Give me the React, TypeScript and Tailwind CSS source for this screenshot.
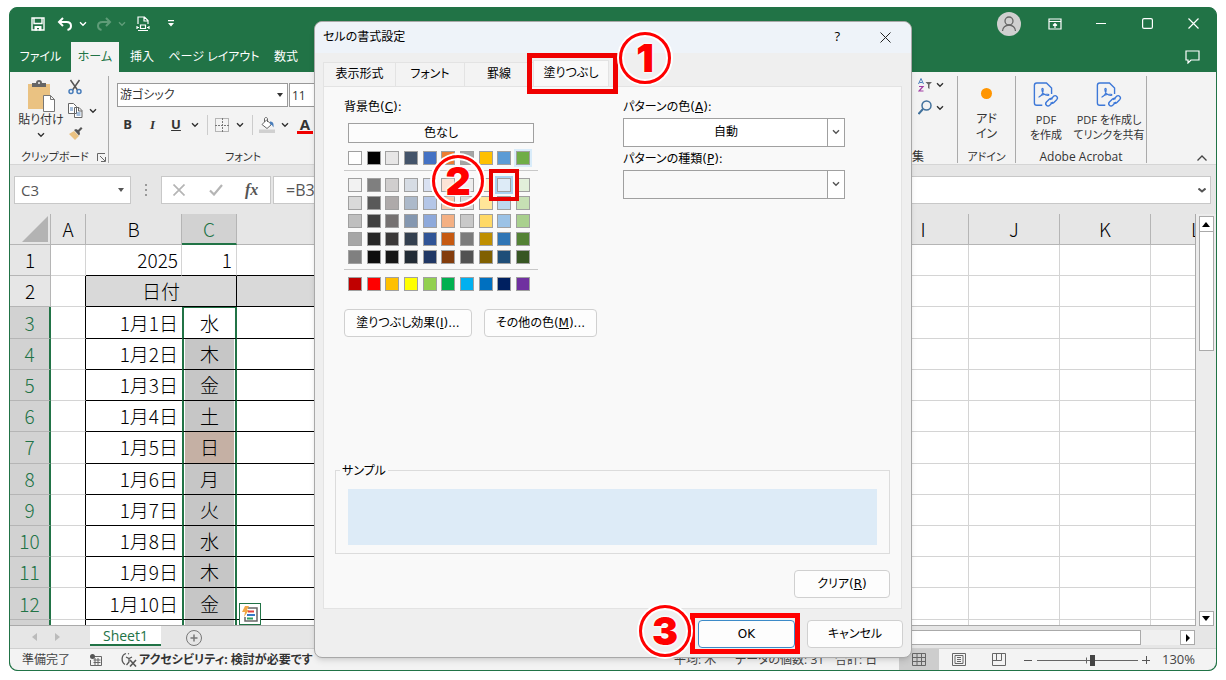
import React, { useState } from 'react';

const columns = ['A', 'B', 'C', 'D', 'E', 'F', 'G', 'H', 'I', 'J', 'K', 'L'];
const restColumns = ['E', 'F', 'G', 'H', 'I', 'J', 'K', 'L'];

const days = [
  { row: '3', date: '1月1日', day: '水' },
  { row: '4', date: '1月2日', day: '木' },
  { row: '5', date: '1月3日', day: '金' },
  { row: '6', date: '1月4日', day: '土' },
  { row: '7', date: '1月5日', day: '日' },
  { row: '8', date: '1月6日', day: '月' },
  { row: '9', date: '1月7日', day: '火' },
  { row: '10', date: '1月8日', day: '水' },
  { row: '11', date: '1月9日', day: '木' },
  { row: '12', date: '1月10日', day: '金' },
  { row: '', date: '', day: '' },
];

const themeColors = ['#ffffff', '#000000', '#e7e6e6', '#44546a', '#4472c4', '#ed7d31', '#a5a5a5', '#ffc000', '#5b9bd5', '#70ad47'];

const tintRows = [
  ['#f2f2f2', '#7f7f7f', '#d0cece', '#d6dce4', '#d9e1f2', '#fce4d6', '#ededed', '#fff2cc', '#ddebf7', '#e2efda'],
  ['#d9d9d9', '#595959', '#aeaaaa', '#acb9ca', '#b4c6e7', '#f8cbad', '#dbdbdb', '#ffe699', '#bdd7ee', '#c6e0b4'],
  ['#bfbfbf', '#404040', '#757171', '#8497b0', '#8ea9db', '#f4b084', '#c9c9c9', '#ffd966', '#9bc2e6', '#a9d08e'],
  ['#a6a6a6', '#262626', '#3a3838', '#333f4f', '#305496', '#c65911', '#7b7b7b', '#bf8f00', '#2f75b5', '#548235'],
  ['#808080', '#0d0d0d', '#161616', '#222b35', '#203764', '#833c0c', '#525252', '#806000', '#1f4e78', '#375623'],
];

const standardColors = ['#c00000', '#ff0000', '#ffc000', '#ffff00', '#92d050', '#00b050', '#00b0f0', '#0070c0', '#002060', '#7030a0'];

const Chevron: React.FC<{ className?: string }> = ({ className = '' }) => (
  <svg viewBox="0 0 8 6" className={`w-2 h-[6px] shrink-0 ${className}`} fill="none" stroke="currentColor" strokeWidth="1.4">
    <path d="M1 1.2 4 4.2 7 1.2" />
  </svg>
);

const Caret: React.FC<{ className?: string }> = ({ className = '' }) => (
  <svg viewBox="0 0 6 4" className={`w-[6px] h-1 shrink-0 ${className}`} fill="currentColor">
    <path d="M0 0h6L3 4z" />
  </svg>
);

const TitleBar = () => (
  <div className="h-[34px] shrink-0 flex items-center text-white pl-[21px] pr-[17px] pb-[3px]">
    <button aria-label="上書き保存">
      <svg viewBox="0 0 14 14" className="w-[14px] h-[14px]" fill="none" stroke="currentColor" strokeWidth="1.4">
        <path d="M1 1h12v12H1zM3 1v5.500h8V1" />
        <path fill="currentColor" stroke="none" d="M3.500 9h7v4.500H8V11H6v2.500H3.500z" />
      </svg>
    </button>
    <button aria-label="元に戻す" className="ml-3 flex items-center gap-[6px]">
      <svg viewBox="0 0 16 14" className="w-4 h-[14px]" fill="none" stroke="currentColor" strokeWidth="2">
        <path d="M6 1 2 5l4 4M2 5h7.500c3 0 4.500 1.500 4.500 4 0 2-1.500 3.500-3.500 4" />
      </svg>
      <Chevron />
    </button>
    <button aria-label="やり直し" className="ml-[9px] flex items-center gap-[6px] text-[#5f9c78]">
      <svg viewBox="0 0 16 14" className="w-4 h-[14px]" fill="none" stroke="currentColor" strokeWidth="2">
        <path d="m10 1 4 4-4 4M14 5H6.500C3.500 5 2 6.500 2 9c0 2 1.500 3.500 3.500 4" />
      </svg>
      <Chevron />
    </button>
    <button aria-label="印刷プレビュー" className="ml-[10px]">
      <svg viewBox="0 0 14 16" className="w-[14px] h-4" fill="none" stroke="currentColor" strokeWidth="1.2">
        <path d="M2 8V1h6.500L12 4.500V8M8 1v4h4M2 14.500h10M4.500 9h5v3.500h-5zM1 11.500h2M11 11.500h2M1 10v3M13 10v3" />
      </svg>
    </button>
    <button aria-label="カスタマイズ" className="ml-[18px]">
      <svg viewBox="0 0 6 7" className="w-[6px] h-[7px]" fill="currentColor">
        <path d="M0 0h6v1.200H0zM0 3h6L3 6.500z" />
      </svg>
    </button>
    <div className="ml-auto flex items-center">
      <button aria-label="アカウント" className="mr-[27px]">
        <svg viewBox="0 0 24 24" className="w-6 h-6" fill="none" stroke="#666" strokeWidth="1.300">
          <circle cx="12" cy="12" r="12" fill="#d0d0d0" stroke="none" />
          <circle cx="12" cy="9" r="4" />
          <path d="M5.500 19c0-3.500 3-6 6.500-6s6.500 2.500 6.500 6" />
        </svg>
      </button>
      <button aria-label="リボンの表示オプション" className="mr-[34px]">
        <svg viewBox="0 0 14 12" className="w-[14px] h-3" fill="none" stroke="currentColor" strokeWidth="1.200">
          <path d="M1 1h12v10H1zM1 3.500h12M7 10V5.500M5 7.500l2-2 2 2" />
        </svg>
      </button>
      <button aria-label="最小化" className="mr-9">
        <svg viewBox="0 0 10 10" className="w-[10px] h-[10px]" stroke="currentColor"><path d="M0 4.500h10" /></svg>
      </button>
      <button aria-label="最大化" className="mr-[35px]">
        <svg viewBox="0 0 11 11" className="w-[11px] h-[11px]" fill="none" stroke="currentColor" strokeWidth="1.200"><rect x="0.600" y="0.600" width="9.800" height="9.800" rx="1.500" /></svg>
      </button>
      <button aria-label="閉じる">
        <svg viewBox="0 0 11 11" className="w-[11px] h-[11px]" stroke="currentColor" strokeWidth="1.200"><path d="m.5.5 10 10M10.500.5l-10 10" /></svg>
      </button>
    </div>
  </div>
);

const RibbonTabs = () => (
  <div className="h-[30px] shrink-0 flex items-center text-white text-xs">
    <button className="w-[61px] h-full">ファイル</button>
    <button className="w-12 h-full bg-[#f3f3f3] text-[#217346]">ホーム</button>
    <button className="w-[46px] h-full">挿入</button>
    <button className="w-[98px] h-full whitespace-nowrap">ページ レイアウト</button>
    <button className="w-[46px] h-full">数式</button>
    <button aria-label="コメント" className="ml-auto mr-4">
      <svg viewBox="0 0 15 14" className="w-[15px] h-[14px]" fill="none" stroke="currentColor" strokeWidth="1.200">
        <path d="M1 1h13v9H6l-3 3v-3H1z" />
      </svg>
    </button>
  </div>
);

const AcrobatIcon = () => (
  <svg viewBox="0 0 28 30" className="w-[26px] h-7" fill="none" stroke="#3d78d8" strokeWidth="1.500">
    <path d="M10 26H4c-1.500 0-2.500-1-2.500-2.500v-19C1.500 3 2.500 2 4 2h10.500L20 7.500V14" />
    <path strokeWidth="1.200" d="M6 17.500c3-1.500 5-5 5-8.500 0-1.500-1.500-1.500-1.500 0 0 3.500 3 6.500 6.500 6.500 1.500 0 1.500-1.200 0-1.300-4-.2-8 1.300-10 3.300" />
    <path d="m18.500 20 3.500-3.500c2.500-2.200 5.800 1 3.500 3.500L22.500 23c-1 1-2.500 1-3.500 0" />
    <path d="M21.500 22.500 18 26c-2.500 2.200-5.800-1-3.500-3.500l3-3c1-1 2.500-1 3.500 0" />
  </svg>
);

const Ribbon = () => (
  <div className="h-[93px] shrink-0 flex bg-[#f3f3f3] text-xs text-[#333] border-b border-[#d5d5d5]">
    <div className="w-[99px] mt-1 mb-px border-r border-[#aaa] flex flex-col">
      <div className="flex-1 flex">
        <button className="ml-1 w-[54px] pt-1 flex flex-col items-center whitespace-nowrap leading-4">
          <svg viewBox="0 0 28 32" className="w-7 h-8 shrink-0">
            <path fill="#eac282" d="M1 4h22v25H1z" />
            <path fill="#666" d="M5 7V3h4a3 3 0 0 1 6 0h4v4z" />
            <circle cx="12" cy="3" r="1" fill="#f3f3f3" />
            <path fill="#fff" stroke="#777" d="M16.500 15.500h7l4 4v12h-11zM23.500 15.500v4h4" />
          </svg>
          貼り付け
          <Chevron className="mt-1" />
        </button>
        <div className="flex flex-col gap-2 pt-[3px]">
          <button aria-label="切り取り">
            <svg viewBox="0 0 14 16" className="w-[14px] h-4" fill="none" strokeWidth="1.500">
              <path stroke="#555" d="m2.500 1 7 10M11.500 1l-7 10" />
              <circle cx="3" cy="12.500" r="2" stroke="#4a7ebb" />
              <circle cx="11" cy="12.500" r="2" stroke="#4a7ebb" />
            </svg>
          </button>
          <button aria-label="コピー" className="flex items-center gap-[6px]">
            <svg viewBox="0 0 15 15" className="w-[15px] h-[15px]" fill="#fff" stroke="#666">
              <path d="M.5.500h5l3 3v7h-8zM6.500 4.500h4.500l3 3v7H6.500zM10.500 4.500V8H14" />
              <path stroke="#4a7ebb" d="M2 5h3M2 7h3M8.500 10h4M8.500 12h4" />
            </svg>
            <Chevron />
          </button>
          <button aria-label="書式のコピー">
            <svg viewBox="0 0 15 14" className="w-[15px] h-[14px]">
              <path fill="#eac282" d="m1 8 5-3 5 5-4 4z" />
              <path fill="#555" d="m6 4 2-1 2 1 3-3 1.500 1.500-3 3L12 8l-1 1.500z" />
            </svg>
          </button>
        </div>
      </div>
      <div className="h-3 flex items-center pl-[11px] pr-[2px] text-[11px]">
        クリップボード
        <svg viewBox="0 0 9 9" className="ml-auto w-[9px] h-[9px]" fill="none" stroke="#666">
          <path d="M.5 8V.500H8M3 3l5 5M8.500 4v4.500H4" />
        </svg>
      </div>
    </div>

    <div className="w-[260px] mt-1 mb-px pl-2 flex flex-col">
      <div className="flex gap-px mt-[7px]">
        <div className="w-[171px] h-6 bg-white border border-[#999] flex items-center justify-between px-[2px]">
          <input aria-label="フォント名" defaultValue="游ゴシック" className="w-[140px] outline-none" />
          <Caret className="mr-[2px]" />
        </div>
        <input aria-label="フォント サイズ" defaultValue="11" className="w-11 h-6 bg-white border border-[#999] px-[2px]" />
      </div>
      <div className="h-9 flex items-center pl-[6px]">
        <button className="w-[9px] font-bold text-[13px]">B</button>
        <button className="ml-4 w-[9px] font-bold italic text-[13px] font-['Liberation_Serif',serif]">I</button>
        <button className="ml-[14px] w-[10px] font-bold underline text-[13px]">U</button>
        <Chevron className="ml-[10px]" />
        <div className="ml-2 w-px h-5 bg-[#ccc]" />
        <svg viewBox="0 0 14 14" className="ml-[7px] w-[14px] h-[14px]" fill="none" stroke="#777">
          <path strokeDasharray="1 1" d="M.5.500h13v13H.5z" />
          <path d="M0 7.500h14M7.500 0v14" strokeDasharray="2 1" />
        </svg>
        <Chevron className="ml-[7px]" />
        <div className="ml-2 w-px h-5 bg-[#ccc]" />
        <svg viewBox="0 0 16 16" className="ml-[6px] w-4 h-4" fill="none">
          <path stroke="#666" fill="#fff" d="m3 7.500 4.500-4.500 5 4.500L8 11.500zM5.500 5V2c0-2 3-2 3 0v3" />
          <path fill="#4a7ebb" d="M11 4.500c3 0 4 2 3.500 6-1-1.500-1-3-3.500-3z" />
          <path fill="#d0d0d0" d="M0 12.500h16V16H0z" />
        </svg>
        <Chevron className="ml-[6px]" />
        <button className="ml-2 w-4 h-[17px] leading-[14px] font-bold text-[15px] border-b-[3px] border-[#f00000]">A</button>
      </div>
      <div className="mt-auto h-3 flex items-center justify-center text-[11px]">フォント</div>
    </div>

    <div className="ml-auto w-[91px] mt-1 mb-px border-r border-[#aaa] flex flex-col items-center">
      <div className="flex-1 self-end pr-[13px] pt-[2px] flex flex-col gap-2">
        <button aria-label="並べ替えとフィルター" className="flex items-center gap-1">
          <svg viewBox="0 0 14 14" className="w-[14px] h-[14px]" fill="none">
            <path stroke="#4a7ebb" d="M.5 6 3 .500 5.500 6M1.500 4.500h3" />
            <path stroke="#a23fa5" strokeWidth="1.200" d="M1 8.500h4L1 13h4.500" />
            <path fill="#666" d="M7.500 4H14l-2.500 2.500V11l-1.500-1V6.500z" />
          </svg>
          <Chevron />
        </button>
        <button aria-label="検索と選択" className="flex items-center gap-1">
          <svg viewBox="0 0 14 15" className="w-[14px] h-[15px]" fill="none" stroke="#41719c" strokeWidth="1.500">
            <circle cx="8.500" cy="5.500" r="4.500" />
            <path strokeWidth="2" d="m5 9-4.500 5" />
          </svg>
          <Chevron />
        </button>
      </div>
      <div className="h-3 flex items-center">編集</div>
    </div>
    <div className="w-[58px] mt-1 mb-px border-r border-[#aaa] flex flex-col items-center">
      <button className="flex-1 flex flex-col items-center leading-[15px] pt-3">
        <span className="w-[11px] h-[11px] rounded-full bg-[#ff9500] mb-3" />
        <span>アド<br />イン</span>
      </button>
      <div className="h-3 flex items-center text-[11px]">アドイン</div>
    </div>
    <div className="w-[131px] mt-1 mb-px border-r border-[#aaa] flex flex-col items-center">
      <div className="flex-1 flex leading-[15px] whitespace-nowrap text-[11px]">
        <button className="w-14 pt-[5px] flex flex-col items-center">
          <AcrobatIcon />
          <span className="mt-[3px]">PDF<br />を作成</span>
        </button>
        <button className="w-[70px] pt-[5px] flex flex-col items-center">
          <AcrobatIcon />
          <span className="mt-[3px]">PDF を作成し<br />てリンクを共有</span>
        </button>
      </div>
      <div className="h-3 flex items-center">Adobe Acrobat</div>
    </div>
    <button aria-label="リボンを折りたたむ" className="w-[69px] flex items-end justify-end pr-2 pb-[3px]">
      <svg viewBox="0 0 10 6" className="w-[10px] h-[6px] mr-[1px]" fill="none" stroke="#444" strokeWidth="1.300"><path d="M.5 5.500 5 1l4.500 4.500" /></svg>
    </button>
  </div>
);

const FormulaBar = () => (
  <div className="h-[49px] shrink-0 bg-[#e6e6e6] flex items-start pt-[11px] pl-1 pr-[5px] text-[#555]">
    <div className="w-[117px] h-7 bg-white border border-[#c8c8c8] flex items-center justify-between px-[6px]">
      <input aria-label="名前ボックス" defaultValue="C3" className="w-20 text-[15px] outline-none" />
      <Caret />
    </div>
    <div className="h-7 w-[30px] flex flex-col items-center justify-center gap-[3px]">
      <span className="w-[2px] h-[2px] bg-[#999]" />
      <span className="w-[2px] h-[2px] bg-[#999]" />
      <span className="w-[2px] h-[2px] bg-[#999]" />
    </div>
    <div className="w-[110px] h-7 bg-white border border-[#c8c8c8] flex items-center pl-[11px]">
      <svg viewBox="0 0 12 12" className="w-3 h-3" stroke="#b5b5b5" strokeWidth="1.700"><path d="m.5.5 11 11M11.500.5l-11 11" /></svg>
      <svg viewBox="0 0 14 12" className="ml-6 w-[14px] h-3" fill="none" stroke="#b5b5b5" strokeWidth="2.200"><path d="m1 6.500 4 4L13 1" /></svg>
      <span className="ml-[22px] italic font-bold text-base leading-4 font-['Liberation_Serif',serif]">fx</span>
    </div>
    <div className="ml-[2px] flex-1 h-7 bg-white border border-[#c8c8c8] flex items-center pl-3 pr-1">
      <input aria-label="数式バー" defaultValue="=B3" className="flex-1 text-base outline-none" />
      <svg viewBox="0 0 8 5" className="w-2 h-[5px]" fill="none" stroke="#555" strokeWidth="2"><path d="m.5.500 3.500 3 3.500-3" /></svg>
    </div>
  </div>
);

const Sheet = () => (
  <div className="flex-1 min-h-0 flex bg-[#e6e6e6]">
    <div className="flex-1 min-w-0 overflow-hidden relative border-r border-b border-[#aaa] bg-white">
      <table className="table-fixed w-[1232px] h-[437px] border-separate border-spacing-0 text-[19px] leading-5 font-light text-black font-['Noto_Sans_CJK_JP',sans-serif]">
        <colgroup>
          <col className="w-[41px]" />
          <col className="w-[35px]" />
          <col className="w-[96px]" />
          <col className="w-[55px]" />
          <col className="w-[277px]" />
          {restColumns.map(c => <col key={c} className="w-[91px]" />)}
        </colgroup>
        <thead>
          <tr className="h-[31px] bg-[#e6e6e6]">
            <th className="border-r border-b border-[#b5b5b5] p-0 align-bottom">
              <svg viewBox="0 0 26 26" className="w-[26px] h-[26px] ml-auto mr-[2px] mb-[2px]" fill="#b3b3b3"><path d="M26 0v26H0z" /></svg>
            </th>
            {columns.map(c => (
              <th key={c} className={`p-0 font-light border-r ${c === 'C' ? 'bg-[#d2d2d2] text-[#217346] border-b-2 border-r-[#b5b5b5] border-b-[#217346]' : 'border-b border-[#b5b5b5]'}`}>{c}</th>
            ))}
          </tr>
        </thead>
        <tbody>
          <tr className="h-[31px]">
            <th className="p-0 font-light bg-[#e6e6e6] border-r border-b border-[#b5b5b5]">1</th>
            <td className="border-r border-b border-[#d4d4d4]" />
            <td className="p-0 pr-[3px] text-right border-r border-b border-r-[#d4d4d4] border-b-black">2025</td>
            <td className="p-0 pr-1 text-right border-r border-b border-r-[#d4d4d4] border-b-black">1</td>
            <td className="border-b border-black" />
            {restColumns.map(c => <td key={c} className="border-r border-b border-[#d4d4d4]" />)}
          </tr>
          <tr className="h-[31px]">
            <th className="p-0 font-light bg-[#e6e6e6] border-r border-b border-[#b5b5b5]">2</th>
            <td className="border-r border-b border-b-[#d4d4d4] border-r-black" />
            <td colSpan={2} className="p-0 text-center bg-[#d9d9d9] border-r border-b border-black">日付</td>
            <td className="bg-[#d9d9d9] border-r border-b border-black" />
            {restColumns.map(c => <td key={c} className="border-r border-b border-[#d4d4d4]" />)}
          </tr>
          {days.map(d => (
            <tr key={d.row} className="h-[31px]">
              <th className="p-0 font-light bg-[#d2d2d2] text-[#217346] border-r-2 border-b border-r-[#217346] border-b-[#b5b5b5]">{d.row}</th>
              <td className="border-r border-b border-b-[#d4d4d4] border-r-black" />
              <td className="p-0 pr-1 text-right border-b border-black">{d.date}</td>
              <td className={`p-0 text-center border-x-2 border-b border-x-[#217346] border-b-black bg-clip-padding ${d.row === '3' ? 'shadow-[inset_0_1px_0_#217346]' : 'shadow-[inset_1px_0_0_white,inset_-1px_0_0_white]'} ${d.row === '3' ? 'bg-white' : d.day === '日' ? 'bg-[#c5b0a4]' : 'bg-[#c6c6c6]'}`}>{d.day}</td>
              <td className="border-r border-b border-black" />
              {restColumns.map(c => <td key={c} className="border-r border-b border-[#d4d4d4]" />)}
            </tr>
          ))}
        </tbody>
      </table>
      <button aria-label="クイック分析" className="absolute left-[229px] bottom-0 w-[22px] h-[22px] bg-white border border-[#217346]">
        <svg viewBox="0 0 20 20" className="w-5 h-5" fill="none">
          <path stroke="#666" strokeWidth="1.500" d="M8 4h9v13H5v-4" />
          <path fill="#f0a848" d="M5 2h4L7 6h2l-5 7 1-5H2z" />
          <path stroke="#e04040" strokeWidth="2" d="M8 7.500h6" />
          <path stroke="#3878c8" strokeWidth="2" d="M7 11h8" />
          <path stroke="#30a060" strokeWidth="2" d="M7 14.500h6" />
        </svg>
      </button>
    </div>
    {/* vertical scroll bar */}
    <div className="w-5 flex flex-col items-center pt-[2px] bg-[#ececec]">
      <button aria-label="上へ" className="w-[15px] h-4 bg-white border border-[#aaa] flex items-center justify-center">
        <svg viewBox="0 0 8 5" className="w-2 h-[5px]"><path d="M0 5h8L4 0z" /></svg>
      </button>
      <div className="w-[15px] h-[119px] bg-white border border-t-0 border-[#aaa]" />
      <button aria-label="下へ" className="mt-auto w-[15px] h-[15px] bg-white border border-[#aaa] flex items-center justify-center">
        <svg viewBox="0 0 8 5" className="w-2 h-[5px]"><path d="M0 0h8L4 5z" /></svg>
      </button>
    </div>
  </div>
);

const SheetTabs = () => (
  <div className="h-[22px] shrink-0 flex items-start bg-[#e6e6e6]">
    <div className="w-[80px] h-full flex items-center justify-center gap-[18px] pr-2">
      <svg viewBox="0 0 5 8" className="w-[5px] h-2" fill="#bbb"><path d="M5 0v8L0 4z" /></svg>
      <svg viewBox="0 0 5 8" className="w-[5px] h-2" fill="#bbb"><path d="M0 0v8l5-4z" /></svg>
    </div>
    <button className="w-[71px] h-5 leading-[17px] bg-white border-b-2 border-[#217346] text-[#217346] text-sm">Sheet1</button>
    <button aria-label="新しいシート" className="ml-[25px] mt-1">
      <svg viewBox="0 0 16 16" className="w-4 h-4" fill="none" stroke="#777"><circle cx="8" cy="8" r="7.500" /><path strokeWidth="1.500" d="M8 4.500v7M4.500 8h7" /></svg>
    </button>
    <div className="ml-auto w-1/2 mr-[21px] mt-1 h-[15px] flex">
      <div className="flex-1 bg-white border border-[#aaa]" />
      <div className="w-[39px] bg-[#f0f0f0]" />
      <button aria-label="右へ" className="w-[15px] bg-white border border-[#aaa] flex items-center justify-center">
        <svg viewBox="0 0 4 8" className="w-1 h-2"><path d="M0 0v8l4-4z" /></svg>
      </button>
    </div>
  </div>
);

const StatusBar = () => (
  <div className="h-[22px] shrink-0 flex items-center bg-[#f3f3f3] border-t border-[#d0d0d0] text-xs text-[#444] whitespace-nowrap">
    <span className="ml-3 w-[68px]">準備完了</span>
    <svg viewBox="0 0 12 12" className="w-3 h-3" fill="none" stroke="#666">
      <path d="M3 2.500h8.500v9H.500V6M3.500 6h7M3.500 8.500h7M5 4v7M8 4v7" />
      <circle cx="2.500" cy="2.500" r="2.500" fill="#555" stroke="none" />
    </svg>
    <svg viewBox="0 0 16 15" className="ml-[19px] w-4 h-[15px]" fill="none" stroke="#555" strokeWidth="1.300">
      <path d="M5 1.500C0 3 0 10 4 12.500M7 1.500l1 .5M5 5l3 1.500L11 5M8 6.500V10l-2.500 3" />
      <path strokeWidth="1.600" d="m9 8 6 6.500M15 8l-6 6.500" />
    </svg>
    <span className="ml-[2px] font-bold text-[#333]">アクセシビリティ: 検討が必要です</span>
    <div className="ml-auto flex items-center h-full">
      <span className="w-[61px]">平均: 木</span>
      <span className="w-[100px]">データの個数: 31</span>
      <span className="w-[64px]">合計: 日</span>
      <button aria-label="標準" className="w-10 h-full bg-[#cdcdcd] flex items-center justify-center">
        <svg viewBox="0 0 14 13" className="w-[14px] h-[13px]" fill="none" stroke="#666"><path d="M.5.500h13v12H.500zM.500 4.500h13M.500 8.500h13M5 0v13M9.500 0v13" /></svg>
      </button>
      <button aria-label="ページ レイアウト" className="w-10 h-full flex items-center justify-center">
        <svg viewBox="0 0 14 13" className="w-[14px] h-[13px]" fill="none" stroke="#666"><path d="M.5.500h13v12H.500zM3 2.500h8v8H3zM5 4.500h4M5 6.500h4M5 8.500h4" /></svg>
      </button>
      <button aria-label="改ページ プレビュー" className="w-10 h-full flex items-center justify-center">
        <svg viewBox="0 0 14 13" className="w-[14px] h-[13px]" fill="none" stroke="#666"><path d="M.5.500h13v12H.500zM4.500.500v7M9.500.500v7h-9" /></svg>
      </button>
      <svg viewBox="0 0 8 8" className="ml-[5px] w-2 h-2" stroke="#555"><path d="M0 4.500h8" /></svg>
      <label className="ml-[5px] w-[101px] h-3 relative flex items-center">
        <input type="range" aria-label="ズーム" min="10" max="400" defaultValue="130" className="absolute inset-0 opacity-0" />
        <svg viewBox="0 0 101 12" className="w-full h-3" preserveAspectRatio="none">
          <path stroke="#666" d="M0 6.500h101M49.500 3.500v6" />
          <path fill="#444" d="M53 1h5v11h-5z" />
        </svg>
      </label>
      <svg viewBox="0 0 8 8" className="ml-1 w-2 h-2" stroke="#555"><path d="M0 4.500h8M4.500 0v8" /></svg>
      <span className="ml-[12px] w-[54px] text-[13px]">130%</span>
    </div>
  </div>
);

const Step: React.FC<{ n: number; className: string }> = ({ n, className }) => (
  <span className={`absolute w-[52px] h-[52px] rounded-full border-[3px] border-[#f00] text-[#f00] flex items-center justify-center text-[39px] leading-none font-black font-['Inter','Open_Sans',sans-serif] shadow-[0_0_0_2px_white,inset_0_0_0_2px_white] [text-shadow:0_0_3px_white,0_0_3px_white,0_0_3px_white] ${className}`}>
    {n}
  </span>
);

const SwatchRow: React.FC<{ colors: string[]; selected: string; hover?: string; onSelect: (c: string) => void }> = ({ colors, selected, hover, onSelect }) => (
  <div className="flex justify-between">
    {colors.map(c => (
      <button
        key={c}
        aria-label={c}
        onClick={() => onSelect(c)}
        className={`w-[14px] h-[14px] border border-[#a0a0a0] ${c === selected ? 'ring-2 ring-[#a9d3f2]' : ''} ${c === hover ? 'ring-2 ring-[#d9ecfa]' : ''}`}
        style={{ backgroundColor: c }}
      />
    ))}
  </div>
);

const FormatCellsDialog = () => {
  const [fill, setFill] = useState('#ddebf7');

  return (
    <div role="dialog" aria-label="セルの書式設定" className="relative w-[598px] h-[637px] flex flex-col bg-[#efefef] border border-[#a8a8a8] rounded-lg text-xs text-black shadow-md font-['DejaVu_Sans','Noto_Sans_CJK_JP',sans-serif]">
      <div className="h-[31px] shrink-0 flex items-center bg-[#eef3f9] rounded-t-lg pl-2 pr-5">
        <h2>セルの書式設定</h2>
        <button className="ml-auto text-[13px] font-['Open_Sans',sans-serif]" aria-label="ヘルプ">?</button>
        <button className="ml-10" aria-label="閉じる">
          <svg viewBox="0 0 11 11" className="w-[11px] h-[11px]" stroke="#222"><path d="m.5.5 10 10M10.500.5l-10 10" /></svg>
        </button>
      </div>

      <div className="flex items-end mt-[7px] ml-2 h-[26px]">
        <button className="w-[73px] h-6 bg-[#f3f3f3] border border-b-0 border-[#e3e3e3]">表示形式</button>
        <button className="w-[69px] h-6 bg-[#f3f3f3] border border-b-0 border-l-0 border-[#e3e3e3]">フォント</button>
        <button className="w-[68px] h-6 bg-[#f3f3f3] border-t border-[#e3e3e3]">罫線</button>
        <div className="relative">
          <button className="w-[76px] h-[26px] bg-[#f9f9f9] border border-b-0 border-[#e3e3e3]">塗りつぶし</button>
          <div className="absolute -left-[6px] -right-[9px] -top-[7px] -bottom-2 border-[5px] border-[#f00000] pointer-events-none" />
          <Step n={1} className="left-[86px] -top-7" />
        </div>
      </div>

      <div className="ml-2 mr-[9px] mb-[11px] flex-1 min-h-0 bg-[#f9f9f9] border border-[#e3e3e3] flex flex-col px-[11px] pb-[10px]">
        <div className="flex pl-[9px] pt-3">
          <div className="w-[195px]">
            <p className="leading-4">背景色(<u>C</u>):</p>
            <button className="mt-2 ml-1 w-[186px] h-[20px] leading-[18px] bg-[#fcfcfc] border border-[#a0a0a0]">色なし</button>
            <div className="relative mt-2 pl-1 pr-[9px]">
              <SwatchRow colors={themeColors} selected={fill} hover="#70ad47" onSelect={setFill} />
              <div className="-ml-1 -mr-2 mt-[5px] mb-[7px] h-px bg-[#c8c8c8]" />
              <div className="flex flex-col gap-1">
                {tintRows.map(row => <SwatchRow key={row[0]} colors={row} selected={fill} onSelect={setFill} />)}
              </div>
              <div className="-ml-1 -mr-2 mt-[5px] mb-[7px] h-px bg-[#c8c8c8]" />
              <SwatchRow colors={standardColors} selected={fill} onSelect={setFill} />
              <div className="absolute left-[145px] top-[18px] w-[30px] h-8 border-4 border-[#e80000] pointer-events-none" />
              <Step n={2} className="left-[88px] top-[4px]" />
            </div>
          </div>
          <div className="ml-[84px] w-[222px] flex flex-col">
            <label htmlFor="pattern-color" className="leading-4">パターンの色(<u>A</u>):</label>
            <div className="relative mt-[3px]">
              <select id="pattern-color" className="appearance-none w-full h-[29px] bg-white border border-[#a0a0a0] text-center pr-5 pl-1">
                <option>自動</option>
              </select>
              <span className="absolute right-0 top-0 w-[18px] h-[29px] border border-[#a0a0a0] flex items-center justify-center pointer-events-none text-[#555]"><Chevron /></span>
            </div>
            <label htmlFor="pattern-type" className="leading-4 mt-1">パターンの種類(<u>P</u>):</label>
            <div className="relative mt-[3px]">
              <select id="pattern-type" className="appearance-none w-full h-[29px] bg-[#f9f9f9] border border-[#a0a0a0]">
                <option></option>
              </select>
              <span className="absolute right-0 top-0 w-[18px] h-[29px] bg-white border border-[#a0a0a0] flex items-center justify-center pointer-events-none text-[#555]"><Chevron /></span>
            </div>
          </div>
        </div>

        <div className="flex gap-3 pl-[9px] mt-[18px]">
          <button className="w-32 h-7 bg-[#fdfdfd] border border-[#d0d0d0] rounded">塗りつぶし効果(<u>I</u>)...</button>
          <button className="w-[113px] h-7 bg-[#fdfdfd] border border-[#d0d0d0] rounded">その他の色(<u>M</u>)...</button>
        </div>

        <fieldset className="mt-auto border border-[#dcdcdc] px-3 pt-[10px] pb-2">
          <legend className="-ml-2 px-[2px] leading-4">サンプル</legend>
          <div className="h-14" style={{ backgroundColor: fill }} />
        </fieldset>
        <button className="self-end mt-4 w-24 h-7 shrink-0 bg-[#fdfdfd] border border-[#d0d0d0] rounded">クリア(<u>R</u>)</button>
      </div>

      <div className="shrink-0 flex justify-end gap-3 pr-2 pb-[9px]">
        <div className="relative">
          <button className="w-[97px] h-7 bg-[#fdfdfd] border border-[#3c8ac8] rounded block">OK</button>
          <div className="absolute -left-2 -right-[5px] -top-[7px] -bottom-[6px] border-[5px] border-[#f00] pointer-events-none" />
          <Step n={3} className="right-[104px] -top-[15px]" />
        </div>
        <button className="w-24 h-7 bg-[#fdfdfd] border border-[#d0d0d0] rounded">キャンセル</button>
      </div>
    </div>
  );
};

const App: React.FC = () => {
  return (
    <div className="h-screen bg-white pt-[7px] px-[9px] pb-[9px] font-['Open_Sans','Noto_Sans_CJK_JP',sans-serif] [font-feature-settings:'palt']">
      <div className="relative h-full flex flex-col rounded-lg border border-[#217346] bg-[#217346]">
        <div className="flex-1 min-h-0 flex flex-col rounded-lg overflow-hidden">
          <TitleBar />
          <RibbonTabs />
          <Ribbon />
          <FormulaBar />
          <Sheet />
          <SheetTabs />
          <StatusBar />
        </div>
        <div className="absolute inset-0 flex items-center justify-center">
          <FormatCellsDialog />
        </div>
      </div>
    </div>
  );
};

export default App;
